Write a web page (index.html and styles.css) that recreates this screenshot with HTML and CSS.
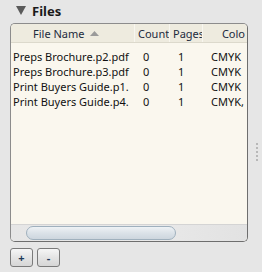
FILE: index.html
```html
<!DOCTYPE html>
<html lang="en">
<head>
    <meta charset="utf-8" />
    <title>Files</title>
    <link rel="stylesheet" href="styles.css">
</head>
<body>
    <!-- Title start -->
    <header class="title">
        <svg class="title-arrow" width="10" height="9" viewBox="0 0 10 9"><path d="M0 0 H10 L5 9 Z" fill="#5a5a5a"/></svg>
        <span>Files</span>
    </header>
    <!-- Title end -->
    <main class="panel">
        <div class="grid-view">
            <div class="grid-row grid-head">
                <div class="cell head-name">File Name <svg class="sort-arrow" width="9" height="5" viewBox="0 0 9 5"><path d="M0 5 L4.5 0 L9 5 Z" fill="#9a9a9a"/></svg></div>
                <div class="cell head-cell">Count</div>
                <div class="cell head-cell">Pages</div>
                <div class="cell head-cell head-color">Colo</div>
            </div>
            <div class="grid-body">
                <div class="grid-row">
                    <div class="cell cell-name">Preps Brochure.p2.pdf</div>
                    <div class="cell">0</div>
                    <div class="cell">1</div>
                    <div class="cell">CMYK</div>
                </div>
                <div class="grid-row">
                    <div class="cell cell-name">Preps Brochure.p3.pdf</div>
                    <div class="cell">0</div>
                    <div class="cell">1</div>
                    <div class="cell">CMYK</div>
                </div>
                <div class="grid-row">
                    <div class="cell cell-name">Print Buyers Guide.p1.</div>
                    <div class="cell">0</div>
                    <div class="cell">1</div>
                    <div class="cell">CMYK</div>
                </div>
                <div class="grid-row">
                    <div class="cell cell-name">Print Buyers Guide.p4.</div>
                    <div class="cell">0</div>
                    <div class="cell">1</div>
                    <div class="cell">CMYK,</div>
                </div>
            </div>
        </div>
        <div class="h-scroll">
            <div class="h-thumb"></div>
        </div>
    </main>
    <footer class="actions">
        <button class="btn">+</button>
        <button class="btn">-</button>
    </footer>
    <div class="grip">
        <span></span><span></span><span></span><span></span><span></span>
    </div>
</body>
</html>
```

FILE: styles.css
```css
:root {
    --bg-color: #e6e6e6;
    --panel-bg: #faf7ee;
    --head-bg: #eeebdf;
    --border-color: #6e6e6e;
}

* {
    box-sizing: border-box;
    margin: 0;
    padding: 0;
}

html,
body {
    width: 262px;
    height: 272px;
    overflow: hidden;
}

body {
    background-color: var(--bg-color);
    font-family: "Noto Sans", "Open Sans", sans-serif;
    font-size: 11px;
    color: #111;
    position: relative;
}

.title {
    height: 23px;
    display: flex;
    align-items: center;
    gap: 6px;
    padding: 0 0 2px 16px;
    font-size: 13px;
    font-weight: 700;
    color: #1a1a1a;
}

.panel {
    margin-left: 10px;
    width: 238px;
    height: 219px;
    border: 1px solid var(--border-color);
    border-left-color: #8c8c8c;
    border-top-color: #8c8c8c;
    border-radius: 5px;
    background-color: var(--panel-bg);
    display: flex;
    flex-direction: column;
    overflow: hidden;
}

.grid-view {
    flex: 1;
    overflow: hidden;
}

.grid-row {
    display: grid;
    grid-template-columns: 124px 35px 33px 44px;
    height: 15px;
    line-height: 15px;
}

.grid-head {
    height: 19px;
    line-height: 19px;
    background-color: var(--head-bg);
    border-bottom: 1px solid #dcd9cc;
    color: #1c2a3d;
}

.grid-body {
    padding-top: 6px;
}

.cell {
    white-space: nowrap;
    overflow: hidden;
    padding-left: 8px;
}

.cell-name {
    padding-left: 2px;
}

.head-name {
    display: flex;
    align-items: center;
    gap: 6px;
    padding-left: 22px;
    border-right: 1px solid #f8f6ef;
}

.head-cell {
    padding-left: 3px;
    border-right: 1px solid #f8f6ef;
}

.head-color {
    text-align: right;
    padding: 0 2px 0 0;
    border-right: none;
}

.h-scroll {
    height: 17px;
    background: linear-gradient(to right, #e6e6e6, #e9e9e9 60%, #e2e2e2);
    border-top: 1px solid #d4d4d4;
    padding: 1px 0 1px 15px;
}

.h-thumb {
    width: 150px;
    height: 14px;
    border: 1px solid #9fb0bd;
    border-radius: 7px;
    background: linear-gradient(to bottom, #eef2f5, #dbe2e8 50%, #cdd6de);
}

.actions {
    display: flex;
    gap: 4px;
    padding: 6px 0 0 10px;
}

.btn {
    width: 23px;
    height: 19px;
    border: 1px solid #7a7a7a;
    border-radius: 3px;
    background: linear-gradient(to bottom, #f6f6f6, #e4e4e4 50%, #d6d6d6);
    font-family: "Noto Sans", sans-serif;
    font-size: 11px;
    font-weight: 700;
    color: #1e3a5a;
    line-height: 15px;
}

/* splitter grip */
.grip {
    position: absolute;
    left: 256px;
    top: 143px;
    display: flex;
    flex-direction: column;
    gap: 2px;
}

.grip span {
    width: 2px;
    height: 2px;
    background-color: #b8b8b8;
}
```
